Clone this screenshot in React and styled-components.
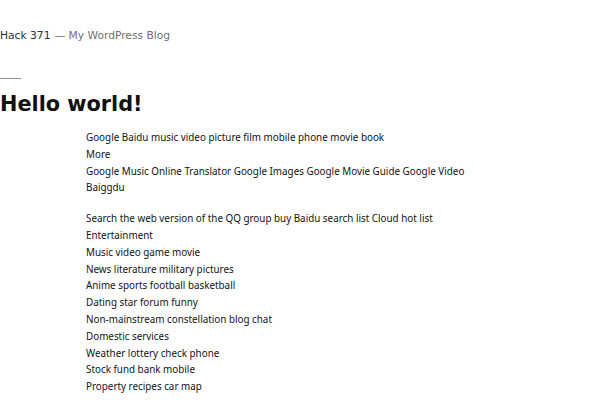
import React from "react";
import styled, { createGlobalStyle } from "styled-components";

const Global = createGlobalStyle`
  html, body { margin: 0; padding: 0; background: #fff; }
  body { font-family: "DejaVu Sans", sans-serif; color: #28303d; }
`;

const Page = styled.div`
  width: 600px;
  height: 400px;
  overflow: hidden;
`;

const Header = styled.header`
  padding-top: 29px;
  font-size: 10.7px;
  line-height: 14px;
  display: flex;
  gap: 4px;
`;

const SiteTitle = styled.span`
  color: #28303d;
`;

const Tagline = styled.span`
  color: #707070;
`;

const Separator = styled.hr`
  margin: 35px 0 0;
  width: 21px;
  border: 0;
  border-top: 1px solid #8a8a8a;
`;

const Title = styled.h1`
  margin: 11px 0 0;
  font-family: "DejaVu Sans", sans-serif;
  font-weight: 700;
  font-size: 20.8px;
  line-height: 28px;
  color: #111;
`;

const Content = styled.div`
  margin-top: 11px;
  padding-left: 86px;
  font-family: "Noto Sans", sans-serif;
  font-size: 9.85px;
  line-height: 16.8px;
  color: #111;
`;

const Para = styled.p`
  margin: 0 0 14px;
`;

const Line = styled.div``;

const p1 = [
  "Google Baidu music video picture film mobile phone movie book",
  "More",
  "Google Music Online Translator Google Images Google Movie Guide Google Video",
  "Baiggdu",
];
const p2 = [
  "Search the web version of the QQ group buy Baidu search list Cloud hot list",
  "Entertainment",
  "Music video game movie",
  "News literature military pictures",
  "Anime sports football basketball",
  "Dating star forum funny",
  "Non-mainstream constellation blog chat",
  "Domestic services",
  "Weather lottery check phone",
  "Stock fund bank mobile",
  "Property recipes car map",
];

export default function App() {
  return (
    <Page>
      <Global />
      <Header>
        <SiteTitle>Hack 371</SiteTitle>
        <Tagline>— My WordPress Blog</Tagline>
      </Header>
      <Separator />
      <Title>Hello world!</Title>
      <Content>
        <Para>{p1.map((t) => <Line key={t}>{t}</Line>)}</Para>
        <Para>{p2.map((t) => <Line key={t}>{t}</Line>)}</Para>
      </Content>
    </Page>
  );
}
